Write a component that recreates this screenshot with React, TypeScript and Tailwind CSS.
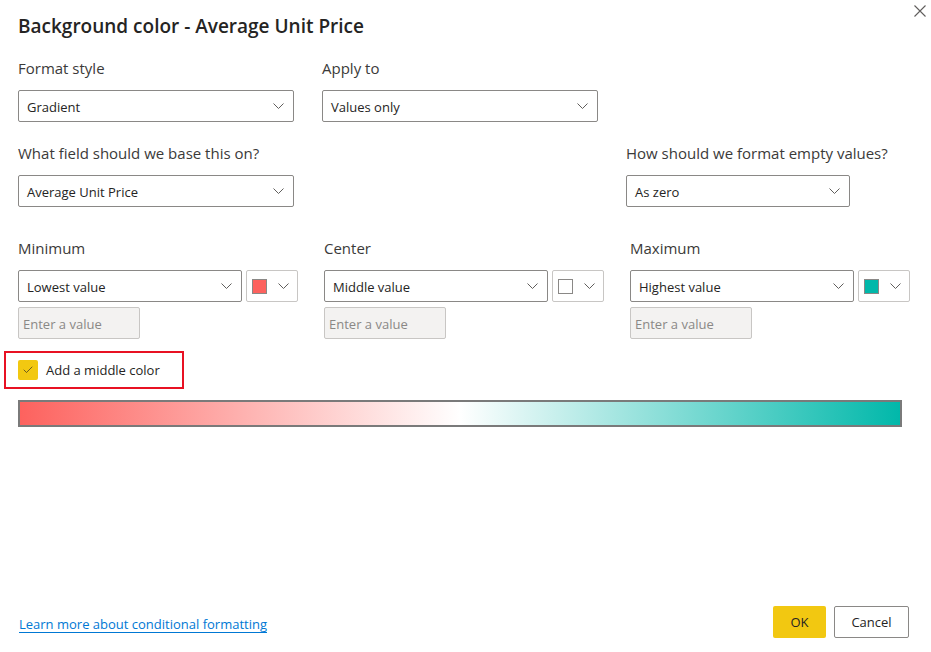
import { Check } from 'lucide-react'

const font = { fontFamily: '"Open Sans", "Noto Sans", sans-serif' }

function Chevron() {
  return (
    <svg width="11" height="6" viewBox="0 0 11 6" className="shrink-0">
      <path d="M0.5 0.5 L5.5 5.5 L10.5 0.5" fill="none" stroke="#605e5c" strokeWidth="1" />
    </svg>
  )
}

function Dropdown({ value, w }: { value: string; w: string }) {
  return (
    <div className={`${w} h-8 border border-[#8a8886] rounded-[2px] flex items-center justify-between pl-[8px] pr-[9px] text-[13px] text-[#252423]`}>
      <span className="mt-[3px]">{value}</span>
      <Chevron />
    </div>
  )
}

function ColorPick({ color }: { color: string }) {
  return (
    <div className="w-[52px] h-8 border border-[#c8c6c4] rounded-[2px] flex items-center pl-[5px] pr-[8px] justify-between">
      <div className={`w-[15px] h-[15px] border border-[#8a8886] ${color}`} />
      <Chevron />
    </div>
  )
}

function Field({ label, value, color }: { label: string; value: string; color: string }) {
  return (
    <div className="w-[280px] flex flex-col">
      <div className="text-[15px] leading-5 text-[#3b3a39]">{label}</div>
      <div className="mt-3 flex gap-[4px]">
        <Dropdown value={value} w="w-[224px]" />
        <ColorPick color={color} />
      </div>
      <div className="mt-[5px] w-[122px] h-8 bg-[#f3f2f1] border border-[#c8c6c4] rounded-[2px] flex items-center pl-[4px] pt-[3px] text-[13px] text-[#8a8886]">
        Enter a value
      </div>
    </div>
  )
}

export default function App() {
  return (
    <div style={font} className="w-[931px] h-[652px] relative bg-white pl-[18px] pr-[22px] flex flex-col">
      {/* close */}
      <button className="absolute left-[914px] top-[5px] w-[12px] h-[12px]">
        <svg width="12" height="12" viewBox="0 0 12 12">
          <path d="M0.5 0.5 L11.5 11.5 M11.5 0.5 L0.5 11.5" stroke="#605e5c" strokeWidth="1.1" fill="none" />
        </svg>
      </button>

      <h1 className="pt-[13px] text-[19px] leading-[26px] font-semibold text-[#252423]">
        Background color - Average Unit Price
      </h1>

      {/* format style / apply to */}
      <div className="mt-[19px] flex gap-[28px]">
        <div className="w-[276px]">
          <div className="text-[15px] leading-5 text-[#3b3a39]">Format style</div>
          <div className="mt-3"><Dropdown value="Gradient" w="w-[276px]" /></div>
        </div>
        <div className="w-[276px]">
          <div className="text-[15px] leading-5 text-[#3b3a39]">Apply to</div>
          <div className="mt-3"><Dropdown value="Values only" w="w-[276px]" /></div>
        </div>
      </div>

      {/* base field / empty values */}
      <div className="mt-[21px] flex gap-[332px]">
        <div className="w-[276px]">
          <div className="text-[15px] leading-5 text-[#3b3a39]">What field should we base this on?</div>
          <div className="mt-3"><Dropdown value="Average Unit Price" w="w-[276px]" /></div>
        </div>
        <div className="w-[224px]">
          <div className="text-[15px] leading-5 text-[#3b3a39] whitespace-nowrap">How should we format empty values?</div>
          <div className="mt-3"><Dropdown value="As zero" w="w-[224px]" /></div>
        </div>
      </div>

      {/* min / center / max */}
      <div className="mt-[31px] flex gap-[26px]">
        <Field label="Minimum" value="Lowest value" color="bg-[#fd625e]" />
        <Field label="Center" value="Middle value" color="bg-white" />
        <Field label="Maximum" value="Highest value" color="bg-[#01b8aa]" />
      </div>

      <div className="mt-3 -ml-[14px] w-[180px] h-[38px] border-2 border-[#e81123] flex items-center pl-[12px] gap-[8px]">
        <div className="w-5 h-5 bg-[#f2c811] rounded-[2px] flex items-center justify-center">
          <Check size={12} strokeWidth={1.3} className="text-[#252423]" />
        </div>
        <span className="text-[13px] text-[#252423] mt-px">Add a middle color</span>
      </div>

      <div className="mt-[11px] w-[884px] h-[27px] border-2 border-[#7a7a7a] bg-[linear-gradient(to_right,#fd625e,#ffffff_50%,#01b8aa)]" />

      <div className="mt-auto pb-[14px] flex items-center justify-between">
        <a className="ml-px mt-[5px] text-[13px] text-[#0078d4] underline underline-offset-[3px]">
          Learn more about conditional formatting
        </a>
        <div className="flex gap-2">
          <button className="w-[53px] h-8 pt-[2px] bg-[#f2c811] rounded-[2px] text-[13px] text-[#252423]">OK</button>
          <button className="w-[75px] h-8 pt-[2px] border border-[#8a8886] rounded-[2px] text-[13px] text-[#252423]">Cancel</button>
        </div>
      </div>
    </div>
  )
}
